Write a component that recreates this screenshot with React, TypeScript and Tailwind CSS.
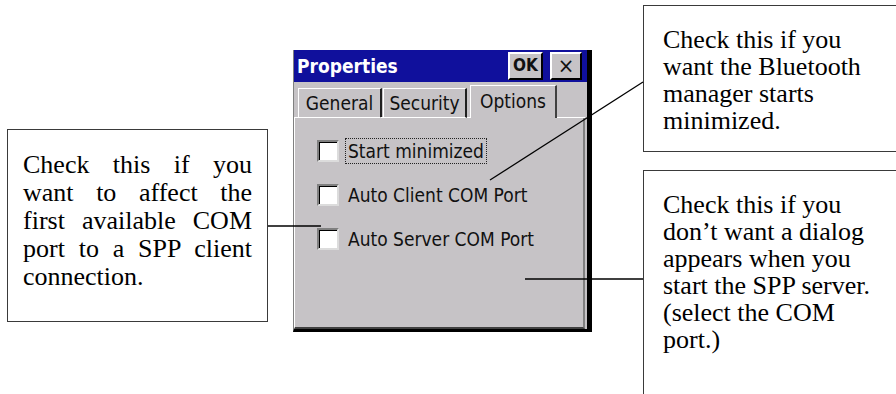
const serif = "font-['Liberation_Serif','Times_New_Roman',serif] text-[26px] text-black";

function JustifiedNote({ lines }: { lines: string[] }) {
  return (
    <div className={`ml-[7px] mt-[129px] h-[193px] w-[261px] shrink-0 border border-[#3a3a3a] px-[15px] pt-[21px] leading-[28px] ${serif}`}>
      {lines.map((line, i) => (
        <div
          key={i}
          className={i < lines.length - 1 ? "text-justify [text-align-last:justify]" : "text-left"}
        >
          {line}
        </div>
      ))}
    </div>
  );
}

function Note({ lines, className }: { lines: string[]; className: string }) {
  return (
    <div className={`w-[260px] border border-[#3a3a3a] pl-[19px] pt-[20px] leading-[27px] ${serif} ${className}`}>
      {lines.map((line, i) => (
        <div key={i} className="whitespace-nowrap">
          {line}
        </div>
      ))}
    </div>
  );
}

function Tab({ label, selected }: { label: string; selected?: boolean }) {
  return (
    <div
      className={
        selected
          ? "flex h-[33px] w-[87px] items-center justify-center border-l border-t border-r-2 border-l-white border-t-white border-r-[#404040] pb-[2px]"
          : "flex h-[30px] w-[84px] items-center justify-center border-l border-t border-r-2 border-b border-l-white border-t-white border-r-[#202020] border-b-white"
      }
    >
      {label}
    </div>
  );
}

function CheckRow({ label, focused }: { label: string; focused?: boolean }) {
  return (
    <div className="flex h-[22px] items-center">
      <div className="h-[22px] w-[22px] shrink-0 border-2 bg-white [border-color:#808080_#dcdcdc_#dcdcdc_#808080] shadow-[inset_1px_1px_0_#000]" />
      {focused ? (
        <span className="ml-[6px] flex h-[26px] items-center border border-dotted border-[#222] px-[2px]">{label}</span>
      ) : (
        <span className="ml-[9px]">{label}</span>
      )}
    </div>
  );
}

function Dialog() {
  return (
    <div className="ml-[25px] mt-[50px] flex h-[282px] w-[299px] shrink-0 flex-col border-b-[3px] border-l border-r-[5px] border-b-black border-l-[#808080] border-r-black bg-[#c6c3c6] font-['DejaVu_Sans_Condensed','DejaVu_Sans',sans-serif] text-[19px] text-[#111]">
      <div className="flex h-[32px] items-center bg-[#10109c] pl-[3px] pr-[5px]">
        <span className="text-[19px] font-bold text-white">Properties</span>
        <div className="ml-auto flex gap-[7px]">
          <div className="flex h-[28px] w-[35px] items-center justify-center border-2 bg-[#c6c3c6] text-[17px] font-bold [border-color:#fff_#000_#000_#fff]">
            OK
          </div>
          <div className="flex h-[28px] w-[32px] items-center justify-center border-2 bg-[#c6c3c6] text-[22px] leading-none [border-color:#fff_#000_#000_#fff]">
            ×
          </div>
        </div>
      </div>

      <div className="flex h-[36px] items-end">
        <div className="h-px w-[4px] bg-white" />
        <div className="w-[83px]">
          <Tab label="General" />
        </div>
        <div className="h-px w-[2px] bg-white" />
        <Tab label="Security" />
        <div className="h-px w-[3px] bg-white" />
        <Tab label="Options" selected />
        <div className="mr-[2px] h-px flex-1 bg-white" />
      </div>

      <div className="mr-[2px] flex flex-1 flex-col gap-[22px] border-b-2 border-l border-r-2 border-b-[#404040] border-l-white border-r-[#808080] pl-[22px] pt-[22px]">
        <CheckRow label="Start minimized" focused />
        <CheckRow label="Auto Client COM Port" />
        <CheckRow label="Auto Server COM Port" />
      </div>
    </div>
  );
}

function Leaders() {
  return (
    <svg className="pointer-events-none absolute left-0 top-0" width="896" height="394">
      <g stroke="#000" strokeWidth="1.3" fill="none">
        <line x1="268" y1="226" x2="321" y2="226" />
        <line x1="643" y1="82" x2="490" y2="180" />
        <line x1="525" y1="279" x2="643" y2="279" />
      </g>
    </svg>
  );
}

export default function App() {
  return (
    <div className="relative h-[394px] w-[896px] overflow-hidden bg-white">
      <div className="flex items-start">
        <JustifiedNote
          lines={[
            "Check this if you",
            "want to affect the",
            "first available COM",
            "port to a SPP client",
            "connection.",
          ]}
        />
        <Dialog />
        <div className="ml-[51px] flex shrink-0 flex-col">
          <Note
            className="mt-[5px] h-[147px]"
            lines={["Check this if you", "want the Bluetooth", "manager starts", "minimized."]}
          />
          <Note
            className="mt-[18px] h-[260px]"
            lines={[
              "Check this if you",
              "don’t want a dialog",
              "appears when you",
              "start the SPP server.",
              "(select the COM",
              "port.)",
            ]}
          />
        </div>
      </div>
      <Leaders />
    </div>
  );
}
